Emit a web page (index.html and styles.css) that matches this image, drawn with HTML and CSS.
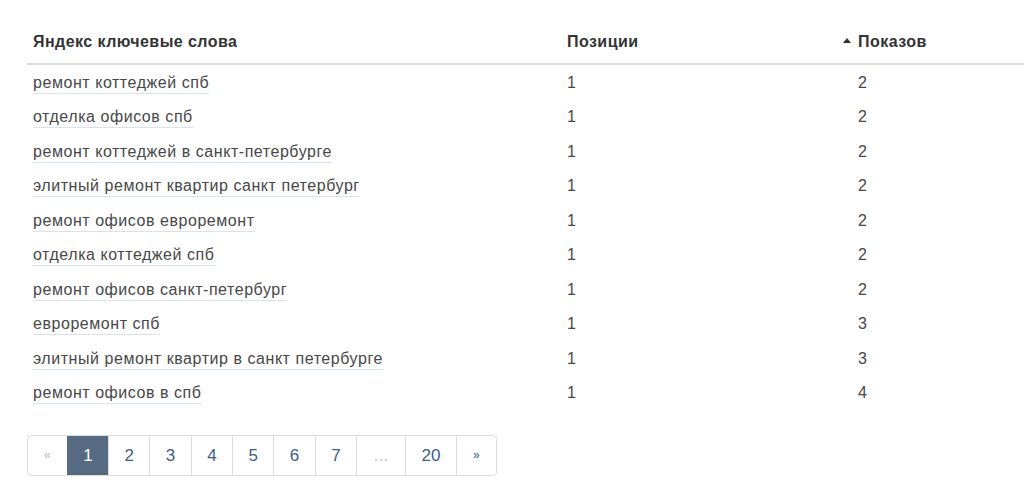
FILE: index.html
```html
<!DOCTYPE html>
<html lang="ru">
<head>
<meta charset="utf-8">
<link rel="stylesheet" href="styles.css">
</head>
<body>
<div class="wrap">
  <table class="kw">
    <thead>
      <tr>
        <th class="c1">Яндекс ключевые слова</th>
        <th class="c2">Позиции</th>
        <th class="c3"><span class="arrow"></span>Показов</th>
      </tr>
    </thead>
    <tbody>
      <tr><td class="c1"><a class="kw-link">ремонт коттеджей спб</a></td><td class="c2">1</td><td class="c3">2</td></tr>
      <tr><td class="c1"><a class="kw-link">отделка офисов спб</a></td><td class="c2">1</td><td class="c3">2</td></tr>
      <tr><td class="c1"><a class="kw-link">ремонт коттеджей в санкт-петербурге</a></td><td class="c2">1</td><td class="c3">2</td></tr>
      <tr><td class="c1"><a class="kw-link">элитный ремонт квартир санкт петербург</a></td><td class="c2">1</td><td class="c3">2</td></tr>
      <tr><td class="c1"><a class="kw-link">ремонт офисов евроремонт</a></td><td class="c2">1</td><td class="c3">2</td></tr>
      <tr><td class="c1"><a class="kw-link">отделка коттеджей спб</a></td><td class="c2">1</td><td class="c3">2</td></tr>
      <tr><td class="c1"><a class="kw-link">ремонт офисов санкт-петербург</a></td><td class="c2">1</td><td class="c3">2</td></tr>
      <tr><td class="c1"><a class="kw-link">евроремонт спб</a></td><td class="c2">1</td><td class="c3">3</td></tr>
      <tr><td class="c1"><a class="kw-link">элитный ремонт квартир в санкт петербурге</a></td><td class="c2">1</td><td class="c3">3</td></tr>
      <tr><td class="c1"><a class="kw-link">ремонт офисов в спб</a></td><td class="c2">1</td><td class="c3">4</td></tr>
    </tbody>
  </table>
  <ul class="pager">
    <li class="pg arrowpg disabled">&laquo;</li>
    <li class="pg active">1</li>
    <li class="pg">2</li>
    <li class="pg">3</li>
    <li class="pg">4</li>
    <li class="pg">5</li>
    <li class="pg">6</li>
    <li class="pg">7</li>
    <li class="pg disabled dots">&hellip;</li>
    <li class="pg">20</li>
    <li class="pg arrowpg">&raquo;</li>
  </ul>
</div>
</body>
</html>
```
FILE: styles.css
```css
html, body {
  margin: 0;
  padding: 0;
  background: #fff;
  overflow: hidden;
}
body {
  font-family: "Liberation Sans", Arial, sans-serif;
  color: #333;
  font-size: 16px;
}
.wrap {
  padding: 24px 0 0 27px;
}
.kw {
  border-collapse: collapse;
  table-layout: fixed;
  width: 1010px;
}
.kw th, .kw td {
  box-sizing: border-box;
}
.kw th {
  text-align: left;
  font-weight: bold;
  font-size: 16px;
  letter-spacing: 0.45px;
  line-height: 20px;
  padding: 8px 6px 11px;
  border-bottom: 2px solid #dcdcdc;
  color: #333;
}
.kw td {
  padding: 7.5px 6px 6.5px;
  line-height: 20.5px;
  color: #484848;
  font-size: 16px;
  letter-spacing: 0.55px;
}
.c1 { width: 534px; }
.c2 { width: 276px; }
.kw .c3 { padding-left: 21px; }
.arrow {
  display: inline-block;
  width: 0;
  height: 0;
  border-left: 4px solid transparent;
  border-right: 4px solid transparent;
  border-bottom: 5px solid #333;
  margin-left: -15px;
  margin-right: 7px;
  vertical-align: 4px;
}
.kw-link {
  color: #484848;
  text-decoration: none;
  border-bottom: 1px solid #d9e3ee;
  padding-bottom: 2px;
}
.pager {
  list-style: none;
  margin: 25px 0 0;
  padding: 0;
  display: inline-flex;
  border: 1px solid #ddd;
  border-radius: 4px;
}
.pg {
  padding: 0 15.45px;
  height: 39px;
  line-height: 39px;
  font-size: 17px;
  color: #3d6089;
  border-left: 1px solid #ddd;
  text-align: center;
}
.pg:first-child { border-left: none; border-radius: 4px 0 0 4px; }
.pg:last-child { border-radius: 0 4px 4px 0; }
.pg.active {
  background: #566b82;
  color: #fff;
  border-left-color: #566b82;
}
.pg.disabled { color: #bbb; }
.dots { font-size: 16px; padding: 0 16px; }
.arrowpg {
  font-size: 12px;
  padding: 0 16px;
}
```
